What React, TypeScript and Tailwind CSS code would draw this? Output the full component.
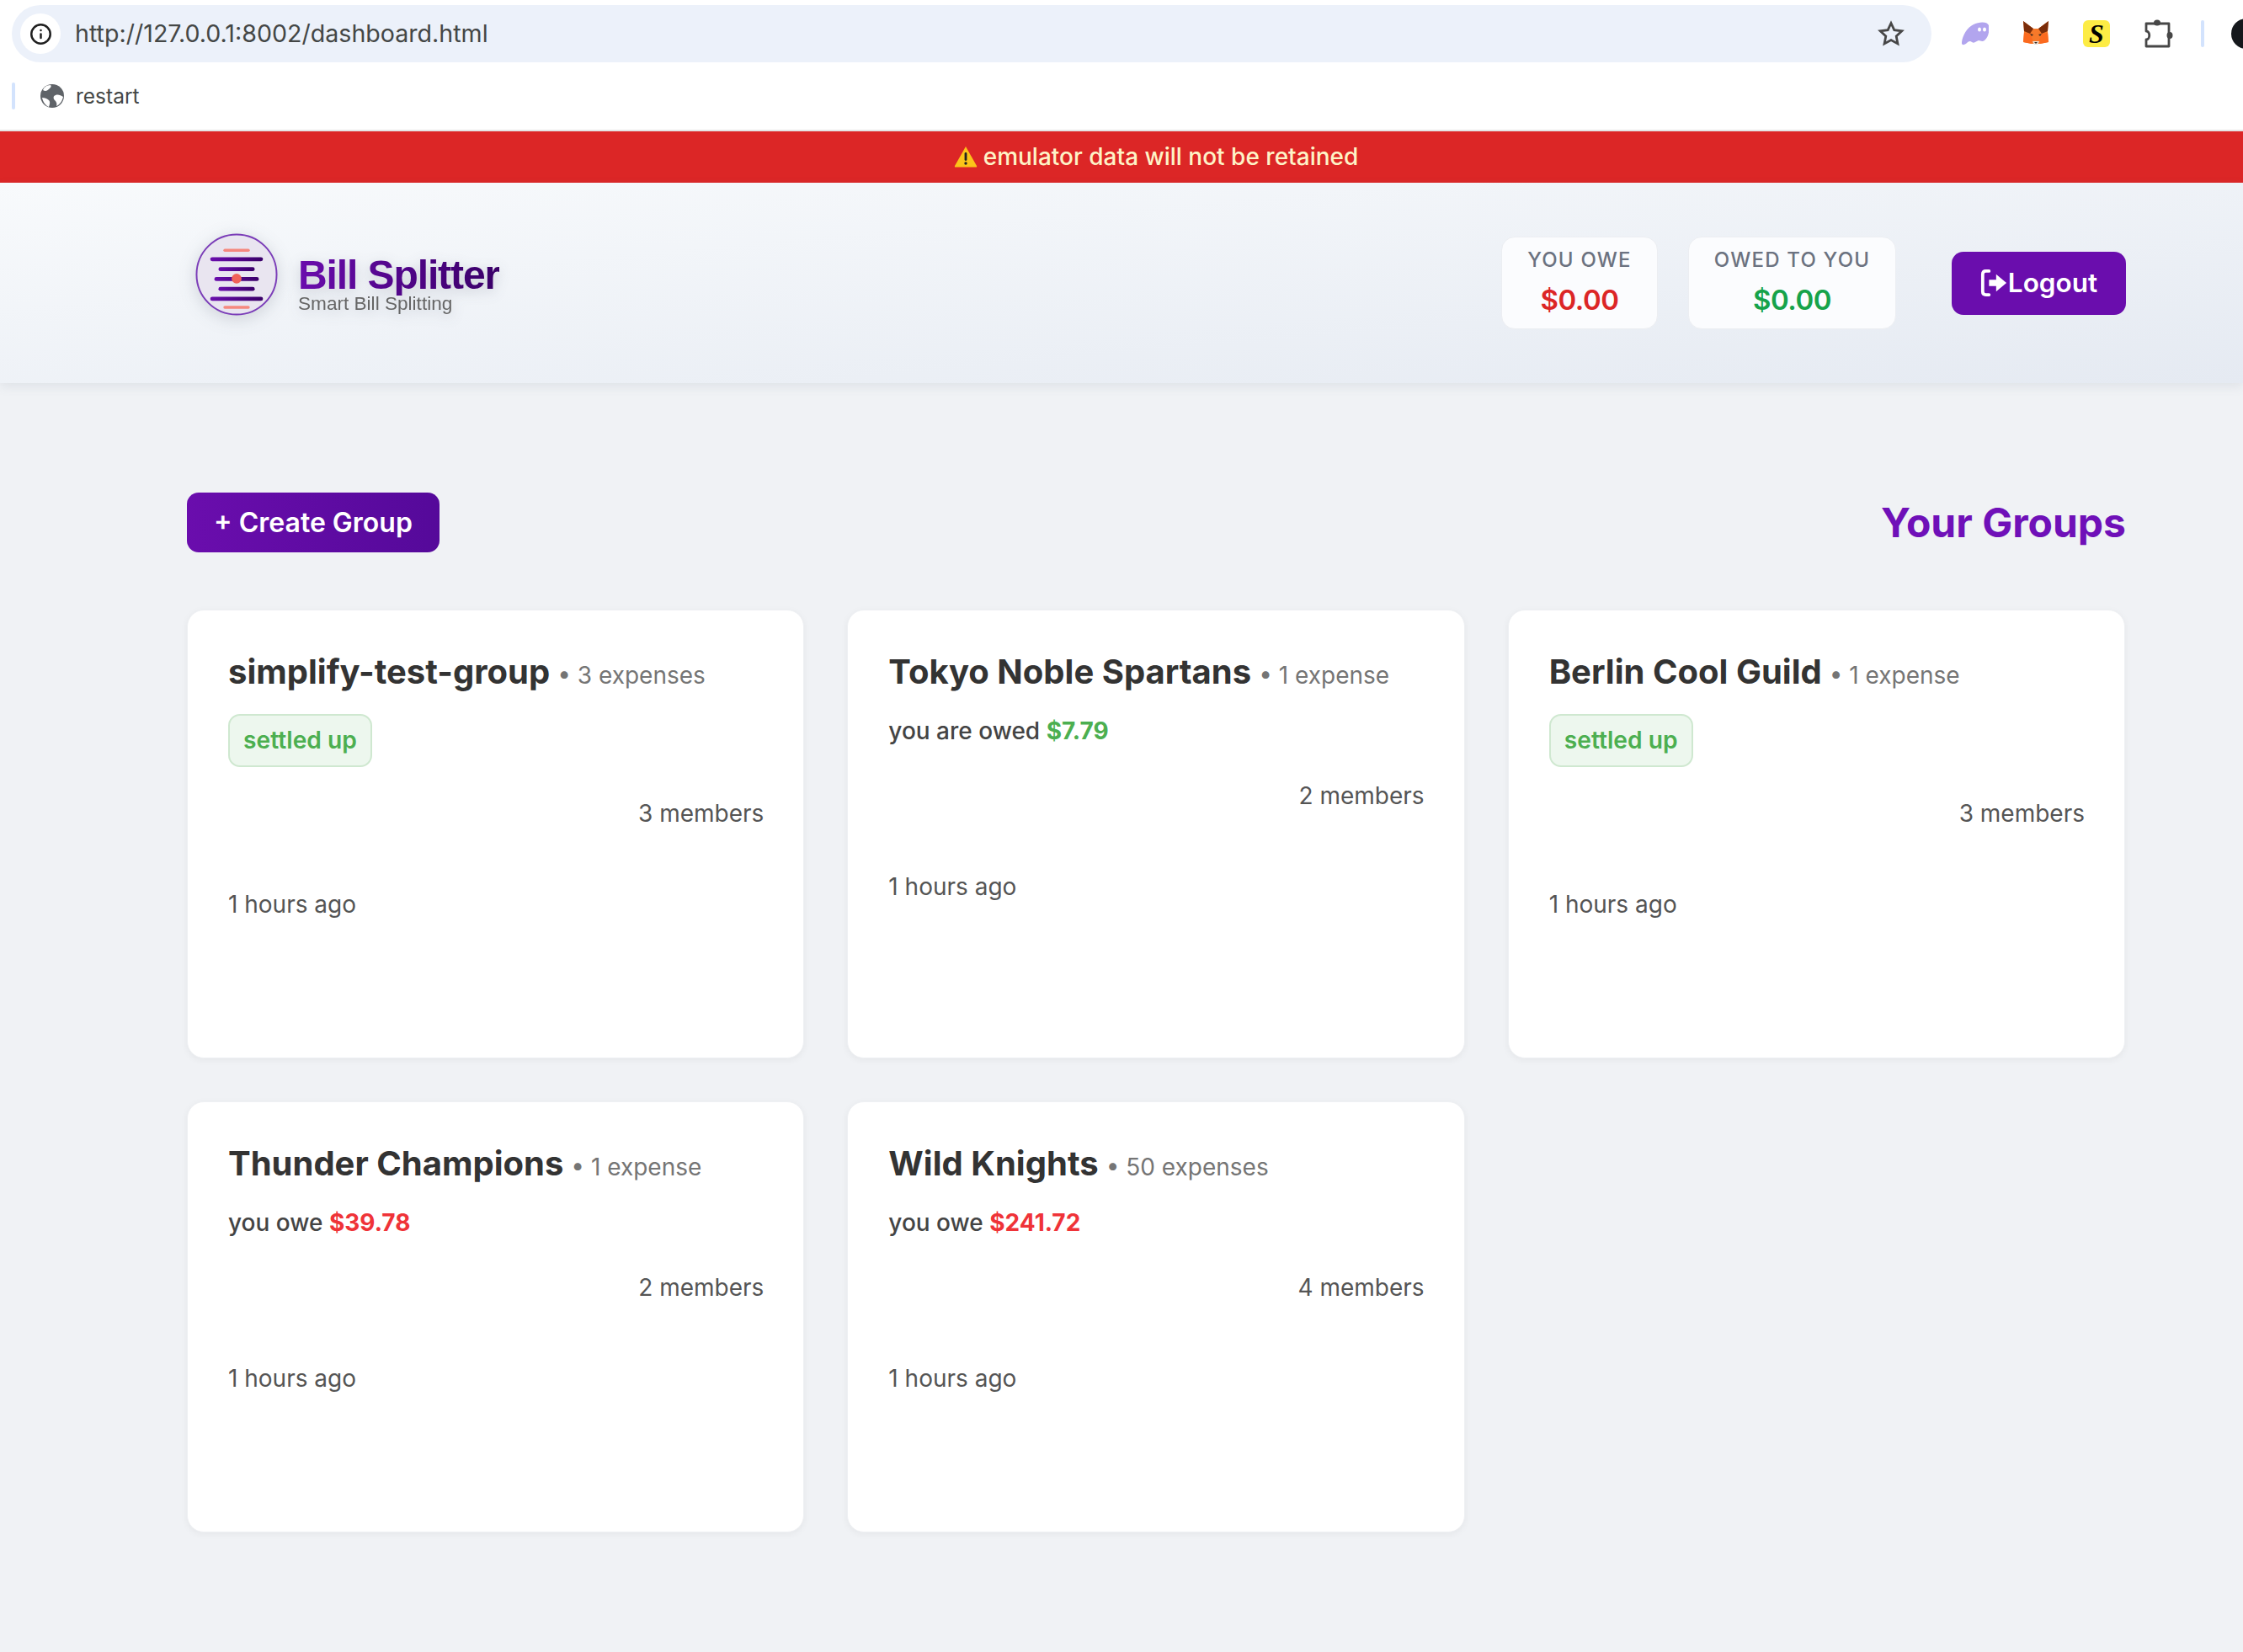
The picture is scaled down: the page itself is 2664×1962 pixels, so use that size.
import React from 'react';
import { Info } from 'lucide-react';

const inter = "font-['Inter',sans-serif]";

const GhostIcon = () => (
  <svg viewBox="0 0 32 28" className="w-[32px] h-[28px] shrink-0">
    <path d="M0 24C1 16 6 7 14 3C20 0 30-1 32 4C33 10 32 18 27 22C24 24 22 22 20 22C17 23 15 26 12 24C10 22 8 23 6 25C3 28-1 28 0 24Z" fill="#b2a5ee" />
    <ellipse cx="21" cy="9" rx="2" ry="2.6" fill="#fff" />
    <ellipse cx="27" cy="9" rx="2" ry="2.6" fill="#fff" />
  </svg>
);

const FoxIcon = () => (
  <svg viewBox="0 0 30 30" className="w-[30px] h-[30px] shrink-0">
    <path d="M0 0L12 9H18L30 0L29 12L30 25L20 27H10L0 25L1 12Z" fill="#f6792a" />
    <path d="M0 0L12 9L8 15L1 12Z" fill="#7b2d0a" />
    <path d="M30 0L18 9L22 15L29 12Z" fill="#7b2d0a" />
    <path d="M1 14L8 15L11 22L10 27L0 25Z" fill="#fb6a1f" />
    <path d="M29 14L22 15L19 22L20 27L30 25Z" fill="#fb6a1f" />
    <path d="M11 24H19L17 28H13Z" fill="#e8e2dc" />
    <path d="M13 25H17L15 27Z" fill="#3a2a20" />
    <path d="M8 15L12 16L10 18Z" fill="#3a2a20" />
    <path d="M22 15L18 16L20 18Z" fill="#3a2a20" />
  </svg>
);

const PuzzleIcon = () => (
  <svg viewBox="0 0 36 36" className="w-[36px] h-[36px] shrink-0">
    <path d="M3 6H30V33H3V25C8 25 8 15 3 15Z" fill="none" stroke="#474747" strokeWidth="2.800" strokeLinejoin="round" />
    <ellipse cx="16" cy="5" rx="4" ry="3.500" fill="#474747" />
    <ellipse cx="31" cy="20" rx="3.500" ry="4" fill="#474747" />
  </svg>
);

const StarIcon = () => (
  <svg viewBox="0 0 32 32" className="ml-auto w-[32px] h-[32px] shrink-0">
    <polygon
      points="16,3.5 19.8,11.7 28.8,12.8 22.2,19 23.9,27.9 16,23.500 8.100,27.9 9.800,19 3.200,12.800 12.200,11.700"
      fill="none"
      stroke="#474747"
      strokeWidth="2.800"
    />
  </svg>
);

const GlobeIcon = () => (
  <svg viewBox="0 0 28 28" className="w-[28px] h-[28px]">
    <circle cx="14" cy="14" r="14" fill="#5f6368" />
    <path d="M3 7C6 9 8 8 11 5C13 3 13 2 12 1C7 1 4 4 3 7ZM27 15C24 13 21 12 18 13C15 14 15 17 17 19C19 21 20 23 19 26C23 24 26 20 27 15ZM2 16C5 16 8 17 10 19C12 21 11 24 10 27C6 25 3 21 2 16Z" fill="#fff" />
  </svg>
);

const WarningIcon = () => (
  <svg viewBox="0 0 28 26" className="w-[28px] h-[26px]">
    <path d="M14 1L27 24C27.5 25 27 25.500 26 25.500H2C1 25.500 .5 25 1 24Z" fill="#fcc419" />
    <rect x="12.600" y="8" width="2.800" height="10" rx="1.400" fill="#222" />
    <circle cx="14" cy="21" r="1.700" fill="#222" />
  </svg>
);

const LogoutIcon = () => (
  <svg viewBox="0 0 34 36" className="w-[32px] h-[34px]">
    <path d="M11 3H7C4.500 3 3 4.500 3 7V29C3 31.500 4.500 33 7 33H11" fill="none" stroke="#fff" strokeWidth="4" strokeLinecap="round" />
    <path d="M11 14H20V7L33 18L20 29V22H11Z" fill="#fff" />
  </svg>
);

const LogoMark = () => (
  <svg viewBox="0 0 100 100" className="w-[98px] h-[98px]">
    <defs>
      <linearGradient id="logoLine" x1="0" y1="0" x2="1" y2="0">
        <stop offset="0" stopColor="#6a0dad" />
        <stop offset="1" stopColor="#3a0068" />
      </linearGradient>
    </defs>
    <circle cx="50" cy="50" r="48.500" fill="#e9e5f0" stroke="#7b3db8" strokeWidth="2" />
    <rect x="34" y="19" width="32" height="3.500" rx="1.750" fill="#f5897f" />
    <rect x="18" y="29" width="64" height="5" rx="2.500" fill="url(#logoLine)" />
    <rect x="28" y="41" width="44" height="5" rx="2.500" fill="url(#logoLine)" />
    <rect x="23" y="53" width="54" height="5" rx="2.500" fill="url(#logoLine)" />
    <rect x="28" y="65" width="44" height="5" rx="2.500" fill="url(#logoLine)" />
    <rect x="18" y="77" width="64" height="5" rx="2.500" fill="url(#logoLine)" />
    <rect x="34" y="88" width="32" height="3.500" rx="1.750" fill="#f5897f" />
    <circle cx="50" cy="55" r="6" fill="#f0625a" />
  </svg>
);

const BrowserChrome = () => (
  <div className={`h-[156px] bg-white border-b-2 border-[#e5e5e5] ${inter}`}>
    <div className="flex items-center pt-[6px] pl-[14px]">
      <div className="w-[2280px] h-[68px] shrink-0 rounded-full bg-[#ecf1fa] flex items-center pl-[10px] pr-[32px]">
        <div className="w-[48px] h-[48px] rounded-full bg-white flex items-center justify-center">
          <Info className="w-[27px] h-[27px] text-[#1f1f1f]" strokeWidth={2.2} />
        </div>
        <span className="ml-[17px] text-[28.600px] text-[#444746]">http://127.0.0.1:8002/dashboard.html</span>
        <StarIcon />
      </div>
      <div className="ml-[36px] flex items-center">
        <GhostIcon />
        <div className="ml-[41px]"><FoxIcon /></div>
        <div className="ml-[41px] w-[32px] h-[32px] shrink-0 rounded-[6px] bg-[#fdec45] flex items-center justify-center font-['Liberation_Serif',serif] font-bold italic text-[32px] leading-none text-black">S</div>
        <div className="ml-[40px]"><PuzzleIcon /></div>
        <div className="ml-[32px] w-[4px] h-[32px] shrink-0 rounded-full bg-[#d3e3fd]" />
        <div className="ml-[32px] w-[36px] h-[36px] shrink-0 rounded-full bg-[#15181c]" />
      </div>
    </div>
    <div className="flex items-center mt-[22px] pl-[14px]">
      <div className="w-[4px] h-[32px] rounded-full bg-[#d3e3fd]" />
      <div className="ml-[30px]"><GlobeIcon /></div>
      <span className="ml-[14px] text-[24.500px] text-[#444746]">restart</span>
    </div>
  </div>
);

const Banner = () => (
  <div className={`h-[61px] bg-[#dc2626] flex items-center justify-center gap-[7px] pl-[82px] pb-[1px] text-[28px] font-medium text-[#fef3c7] ${inter}`}>
    <WarningIcon />
    <span>emulator data will not be retained</span>
  </div>
);

const StatCard: React.FC<{ label: string; value: string; color: string; width: string }> = ({ label, value, color, width }) => (
  <div className={`${width} h-[110px] rounded-[16px] bg-[#fbfcfe] border border-[#eceef2] flex flex-col items-center pt-[9px]`}>
    <span className="text-[24px] leading-[36px] font-medium tracking-[1.200px] text-[#6b7280]">{label}</span>
    <span className={`mt-[7px] text-[33px] leading-[44px] font-semibold tracking-[-0.500px] ${color}`}>{value}</span>
  </div>
);

const Header = () => (
  <header className={`h-[238px] bg-gradient-to-br from-[#f8fafc] to-[#e5eaf2] shadow-[0_4px_12px_rgba(100,116,139,0.12)] flex items-center pl-[232px] pr-[139px] ${inter}`}>
    <div className="mb-[21px] drop-shadow-[0_4px_10px_rgba(50,60,80,0.18)]"><LogoMark /></div>
    <div className="ml-[24px] mt-[2px] flex flex-col drop-shadow-[0_4px_8px_rgba(50,60,80,0.22)] font-['Liberation_Sans',sans-serif]">
      <span className="text-[48px] leading-[48px] font-bold tracking-[-1.100px] bg-gradient-to-r from-[#6a0dad] to-[#3a0068] bg-clip-text text-transparent">Bill Splitter</span>
      <span className="text-[22.600px] leading-[20px] text-[#666666]">Smart Bill Splitting</span>
    </div>
    <div className="ml-auto flex items-center">
      <StatCard label="YOU OWE" value="$0.00" color="text-[#dc2626]" width="w-[186px]" />
      <div className="ml-[36px]">
        <StatCard label="OWED TO YOU" value="$0.00" color="text-[#16a34a]" width="w-[247px]" />
      </div>
      <button className="ml-[66px] w-[207px] h-[75px] rounded-[14px] bg-[#6a0dad] flex items-center justify-center gap-[1px] text-[31.500px] font-semibold text-white">
        <LogoutIcon />
        Logout
      </button>
    </div>
  </header>
);

type Group = {
  name: string;
  expenses: string;
  members: string;
  settled?: boolean;
  label?: string;
  amount?: string;
  amountColor?: string;
};

const groups: Group[] = [
  { name: 'simplify-test-group', expenses: '3 expenses', members: '3 members', settled: true },
  { name: 'Tokyo Noble Spartans', expenses: '1 expense', members: '2 members', label: 'you are owed', amount: '$7.79', amountColor: 'text-[#4caf50]' },
  { name: 'Berlin Cool Guild', expenses: '1 expense', members: '3 members', settled: true },
  { name: 'Thunder Champions', expenses: '1 expense', members: '2 members', label: 'you owe', amount: '$39.78', amountColor: 'text-[#ef3338]' },
  { name: 'Wild Knights', expenses: '50 expenses', members: '4 members', label: 'you owe', amount: '$241.72', amountColor: 'text-[#ef3338]' },
];

const GroupCard: React.FC<{ group: Group }> = ({ group }) => (
  <div className="bg-white rounded-[20px] border border-[#eef0f3] shadow-[0_2px_8px_rgba(0,0,0,0.05)] pt-[50px] pl-[48px] pr-[47px]">
    <div className="flex items-baseline h-[46px] leading-[46px] whitespace-nowrap">
      <span className="text-[40px] font-bold text-[#333333]">{group.name}</span>
      <span className="ml-[9px] text-[28px] text-[#757575]">• {group.expenses}</span>
    </div>
    {group.settled ? (
      <div className="mt-[27px] w-[171px] h-[63px] rounded-[14px] border-2 border-[#cfe8d0] bg-[#edf7ee] flex items-center justify-center text-[28.200px] font-semibold text-[#4caf50]">
        settled up
      </div>
    ) : (
      <div className="mt-[26px] h-[42px] leading-[42px] text-[28px] font-medium text-[#444444]">
        {group.label} <span className={`font-bold ${group.amountColor}`}>{group.amount}</span>
      </div>
    )}
    <div className={`${group.settled ? 'mt-[35px]' : 'mt-[36px]'} h-[40px] leading-[40px] text-right text-[28px] text-[#555555]`}>{group.members}</div>
    <div className="mt-[68px] h-[40px] leading-[40px] text-[28px] text-[#555555]">1 hours ago</div>
  </div>
);

export default function App() {
  return (
    <div className="h-[1962px] bg-[#f0f2f5] overflow-hidden">
      <BrowserChrome />
      <Banner />
      <Header />
      <main className={`pl-[222px] pr-[139px] pt-[130px] ${inter}`}>
        <div className="flex items-center justify-between h-[71px]">
          <button className="w-[300px] h-[71px] rounded-[14px] bg-gradient-to-r from-[#6a0dad] to-[#55099a] text-[32px] font-semibold text-white">
            + Create Group
          </button>
          <h2 className="text-[48px] font-bold text-[#6f10b8]">Your Groups</h2>
        </div>
        <div className="mt-[68px] mr-[1px] grid grid-cols-3 gap-x-[51px] gap-y-[51px] grid-rows-[533px_512px]">
          {groups.map((group) => (
            <GroupCard key={group.name} group={group} />
          ))}
        </div>
      </main>
    </div>
  );
}
